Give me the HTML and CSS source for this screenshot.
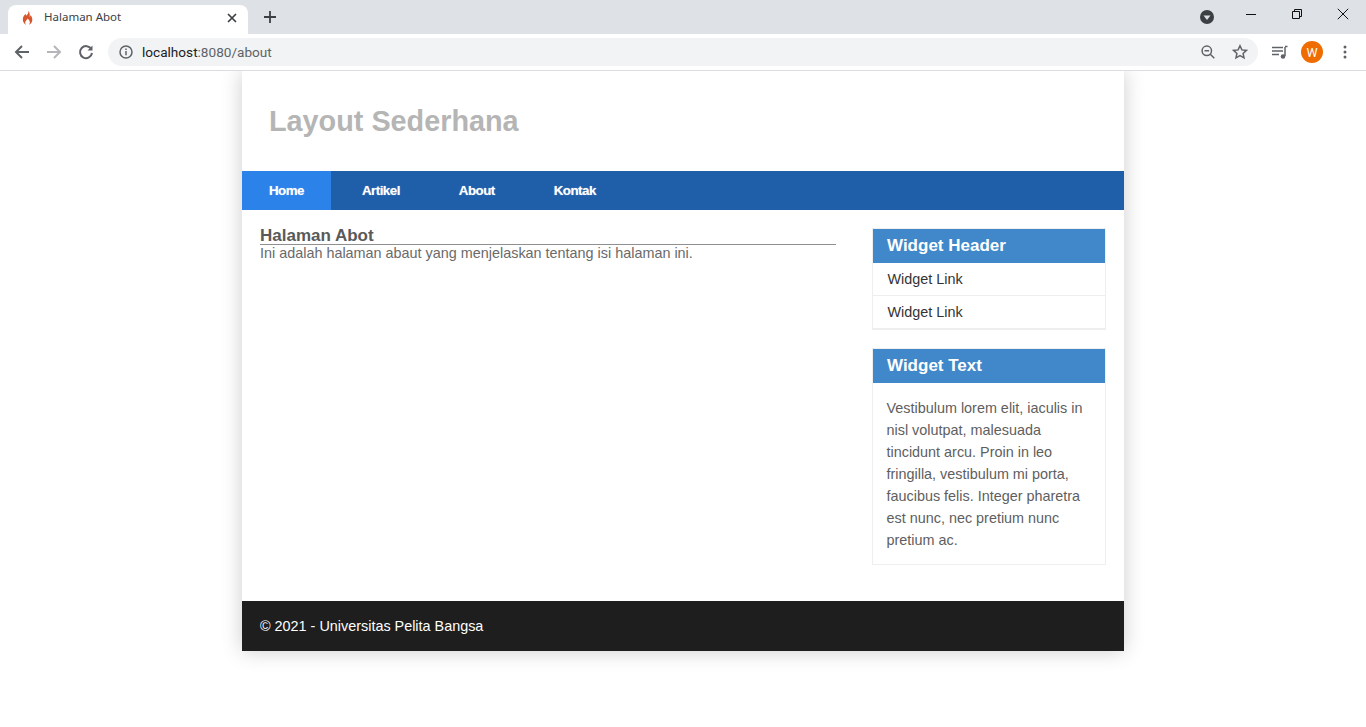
FILE: index.html
```html
<!DOCTYPE html>
<html lang="id">
<head>
<meta charset="utf-8">
<title>Halaman Abot</title>
<link rel="stylesheet" href="styles.css">
</head>
<body>
<div class="browser">
  <div class="tabstrip">
    <div class="tab">
      <svg class="favicon" width="16" height="16" viewBox="0 0 16 16"><path d="M8.300 1c.6 2.200-1 3.300-2 4.700-.5-.5-.6-1.200-.5-1.900C4 5.300 2.800 7.300 2.800 9.500c0 2.900 2 4.900 3.400 5.200-1-1-1.300-2-.7-3.200.5-1 1.700-1.700 2-3 1 .7 2.400 2.300 2.400 3.700 0 1-.4 1.800-1.100 2.500 2-.5 3.500-2.500 3.500-5 0-2-1-3.700-1.800-4.700 0 .8-.2 1.500-.8 2C9.800 4.500 10 2.500 8.300 1z" fill="#d9552b"/></svg>
      <span class="tab-title">Halaman Abot</span>
      <svg class="tab-close" width="10" height="10" viewBox="0 0 10 10"><path d="M1 1l8 8M9 1L1 9" stroke="#3c4043" stroke-width="1.700" fill="none"/></svg>
    </div>
    <svg class="newtab" width="12" height="12" viewBox="0 0 12 12"><path d="M6 0v12M0 6h12" stroke="#3c4043" stroke-width="1.800" fill="none"/></svg>
    <div class="strip-spacer"></div>
    <svg class="media-dot" width="14" height="14" viewBox="0 0 14 14"><circle cx="7" cy="7" r="7" fill="#3c4043"/><path d="M3.500 5.500h7L7 10z" fill="#dee1e6"/></svg>
    <div class="winbtns">
      <svg width="12" height="12" viewBox="0 0 12 12"><path d="M1 6.500h10" stroke="#111" stroke-width="1" fill="none"/></svg>
      <svg width="12" height="12" viewBox="0 0 12 12"><path d="M1.500 3.500h7v7h-7zM3.500 3.500v-2h7v7h-2" stroke="#111" stroke-width="1" fill="none"/></svg>
      <svg width="12" height="12" viewBox="0 0 12 12"><path d="M.8.800l10.400 10.400M11.200.800L.8 11.200" stroke="#111" stroke-width="1" fill="none"/></svg>
    </div>
  </div>
  <div class="toolbar">
    <svg class="navicon" width="16" height="16" viewBox="0 0 16 16"><path d="M15 8H2M8 2L2 8l6 6" stroke="#5f6368" stroke-width="2" fill="none"/></svg>
    <svg class="navicon" width="16" height="16" viewBox="0 0 16 16"><path d="M1 8h13M8 2l6 6-6 6" stroke="#b4b6b9" stroke-width="2" fill="none"/></svg>
    <svg class="navicon" width="16" height="16" viewBox="0 0 16 16"><path d="M13.300 5.200A6 6 0 1 0 14 9" stroke="#5f6368" stroke-width="2" fill="none"/><path d="M14.500 1.500v5h-5z" fill="#5f6368"/></svg>
    <div class="omnibox">
      <svg width="14" height="14" viewBox="0 0 14 14"><circle cx="7" cy="7" r="6" stroke="#5f6368" stroke-width="1.500" fill="none"/><path d="M7 6v4.200M7 3.500v1.500" stroke="#5f6368" stroke-width="1.500"/></svg>
      <span class="url"><span class="url-host">localhost</span>:8080/about</span>
      <span class="omni-spacer"></span>
      <svg width="16" height="16" viewBox="0 0 16 16"><circle cx="6.800" cy="6.800" r="4.700" stroke="#5f6368" stroke-width="1.500" fill="none"/><path d="M4.500 6.800h4.600M10.300 10.300l4 4" stroke="#5f6368" stroke-width="1.500" fill="none"/></svg>
      <svg width="16" height="16" viewBox="0 0 16 16"><path d="M8 1.800l1.900 4.100 4.500.5-3.300 3 .9 4.400L8 11.600l-4 2.200.9-4.400-3.300-3 4.500-.5z" stroke="#5f6368" stroke-width="1.500" fill="none"/></svg>
    </div>
    <svg class="playlist" width="16" height="16" viewBox="0 0 16 16"><path d="M0 3.500h11M0 7h11M0 10.500h7" stroke="#5f6368" stroke-width="1.500" fill="none"/><path d="M13 3v9" stroke="#5f6368" stroke-width="1.500" fill="none"/><path d="M13 2.500h2.500" stroke="#5f6368" stroke-width="1.500" fill="none"/><circle cx="11" cy="12.500" r="2.300" fill="#5f6368"/></svg>
    <div class="avatar">W</div>
    <svg class="kebab" width="4" height="14" viewBox="0 0 4 14"><circle cx="2" cy="2" r="1.500" fill="#5f6368"/><circle cx="2" cy="7" r="1.500" fill="#5f6368"/><circle cx="2" cy="12" r="1.500" fill="#5f6368"/></svg>
  </div>
</div>
<div class="page">
  <header class="site-header"><h1>Layout Sederhana</h1></header>
  <nav class="site-nav">
    <a class="nav-link active" href="#">Home</a>
    <a class="nav-link" href="#">Artikel</a>
    <a class="nav-link" href="#">About</a>
    <a class="nav-link" href="#">Kontak</a>
  </nav>
  <div class="content">
    <main class="main">
      <h2>Halaman Abot</h2>
      <p>Ini adalah halaman abaut yang menjelaskan tentang isi halaman ini.</p>
    </main>
    <aside class="sidebar">
      <section class="widget">
        <h3>Widget Header</h3>
        <ul class="widget-links">
          <li>Widget Link</li>
          <li>Widget Link</li>
        </ul>
      </section>
      <section class="widget">
        <h3>Widget Text</h3>
        <p class="widget-text">Vestibulum lorem elit, iaculis in nisl volutpat, malesuada tincidunt arcu. Proin in leo fringilla, vestibulum mi porta, faucibus felis. Integer pharetra est nunc, nec pretium nunc pretium ac.</p>
      </section>
    </aside>
  </div>
  <footer class="site-footer">© 2021 - Universitas Pelita Bangsa</footer>
</div>
</body>
</html>
```
FILE: styles.css
```css
html, body { margin: 0; padding: 0; background: #fff; overflow: hidden; height: 727px; }
body { font-family: "Liberation Sans", Arial, sans-serif; color: #5e5e5e; }

.browser { height: 71px; box-sizing: border-box; border-bottom: 1px solid #dadce0; position: relative; z-index: 2; background: #fff; }
.tabstrip { height: 34px; background: #dee1e6; display: flex; align-items: flex-start; padding-left: 8px; }
.tab { width: 240px; height: 29px; margin-top: 5px; background: #fff; border-radius: 8px 8px 0 0; display: flex; align-items: center; box-sizing: border-box; padding: 0 11px 4px 12px; }
.favicon { flex: none; }
.tab-title { font: 11.5px "Noto Sans", sans-serif; color: #3c4043; margin: 0 0 2px 8px; flex: 1; }
.tab-close { flex: none; }
.newtab { margin: 11px 0 0 16px; flex: none; }
.strip-spacer { flex: 1; }
.media-dot { margin: 10px 0 0 0; flex: none; }
.winbtns { display: flex; gap: 34px; margin: 8px 17px 0 31px; }

.toolbar { height: 36px; display: flex; align-items: center; padding-left: 14px; }
.navicon { margin-right: 16px; flex: none; }
.omnibox { width: 1150px; height: 28px; margin-left: -2px; background: #f1f3f4; border-radius: 14px; display: flex; align-items: center; box-sizing: border-box; padding: 0 10px 0 11px; flex: none; }
.url { font: 13.6px Roboto, sans-serif; color: #5f6368; margin-left: 9px; }
.url-host { color: #202124; }
.omni-spacer { flex: 1; }
.omnibox svg + svg { margin-left: 16px; }
.playlist { margin-left: 14px; flex: none; }
.avatar { width: 22px; height: 22px; border-radius: 50%; background: #ef6c00; color: #fff; font: 12.5px Roboto, sans-serif; display: flex; align-items: center; justify-content: center; margin-left: 13px; flex: none; }
.kebab { margin-left: 20px; flex: none; }

.page { width: 882px; margin: 0 auto; background: #fff; box-shadow: 0 0 20px rgba(0,0,0,0.2); }
.site-header { height: 100px; box-sizing: border-box; padding: 33px 27px 0; }
.site-header h1 { margin: 0; font-size: 28.8px; line-height: 34px; font-weight: bold; color: #b5b5b5; }

.site-nav { height: 39px; background: #1f5faa; display: flex; }
.nav-link { padding: 0 29.500px; line-height: 39px; font-size: 13.3px; letter-spacing: -0.5px; font-weight: bold; color: #fff; text-decoration: none; text-shadow: 0 0 1px rgba(255,255,255,0.5); }
.nav-link.active { background: #2b82e8; padding: 0 27px; margin-right: 1.500px; }

.content { display: flex; justify-content: space-between; height: 391px; box-sizing: border-box; padding: 18px 18px 0; }
.main { width: 576px; padding-top: 1px; }
.main h2 { margin: 0; font-size: 17px; line-height: 13px; height: 15px; font-weight: bold; color: #5a5a5a; border-bottom: 1px solid #8f8f8f; }
.main p { margin: 0; font-size: 14.4px; line-height: 16px; color: #6a6a6a; }

.sidebar { width: 234px; }
.widget { border: 1px solid #eee; margin-bottom: 18px; }
.widget h3 { margin: 0; height: 34px; box-sizing: border-box; padding: 0 14px; line-height: 33px; background: #4088c9; color: #fff; font-size: 17px; font-weight: bold; }
.widget-links { margin: 0; padding: 0; list-style: none; border-bottom: 1px solid #eee; }
.widget-links li { height: 32px; line-height: 32px; padding: 0 15px 0 14.500px; font-size: 14.4px; color: #333; box-sizing: border-box; }
.widget-links li + li { border-top: 1px solid #eee; height: 33px; }
.widget-text { margin: 0; padding: 14px 13px 13px 13.500px; font-size: 14.4px; line-height: 22px; color: #5e5e5e; }

.site-footer { height: 50px; background: #1e1e1e; color: #fff; font-size: 14.4px; line-height: 50px; padding: 0 18px; }
```
